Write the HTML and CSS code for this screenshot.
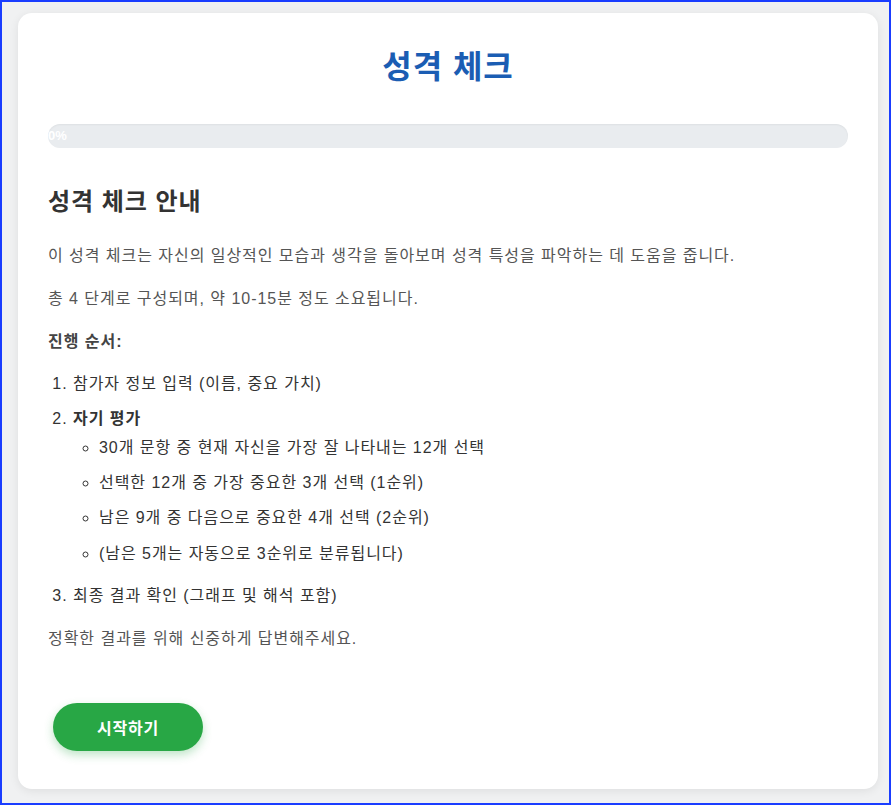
FILE: index.html
```html
<!DOCTYPE html>
<html lang="ko">
<head>
    <meta charset="UTF-8">
    <meta name="viewport" content="width=device-width, initial-scale=1.0">
    <title>성격 체크</title>
    <link rel="stylesheet" href="styles.css">
</head>
<body>
    <div class="frame">
        <div class="container">
            <h1>성격 체크</h1>

            <!-- Barre de progression -->
            <div class="progress">
                <div class="progress-bar">0%</div>
            </div>

            <h2>성격 체크 안내</h2>
            <p>이 성격 체크는 자신의 일상적인 모습과 생각을 돌아보며 성격 특성을 파악하는 데 도움을 줍니다.</p>
            <p>총 4 단계로 구성되며, 약 10-15분 정도 소요됩니다.</p>
            <p class="steps-title"><strong>진행 순서:</strong></p>
            <ol class="steps">
                <li>참가자 정보 입력 (이름, 중요 가치)</li>
                <li><strong>자기 평가</strong>
                    <ul>
                        <li>30개 문항 중 현재 자신을 가장 잘 나타내는 12개 선택</li>
                        <li>선택한 12개 중 가장 중요한 3개 선택 (1순위)</li>
                        <li>남은 9개 중 다음으로 중요한 4개 선택 (2순위)</li>
                        <li>(남은 5개는 자동으로 3순위로 분류됩니다)</li>
                    </ul>
                </li>
                <li>최종 결과 확인 (그래프 및 해석 포함)</li>
            </ol>
            <p>정확한 결과를 위해 신중하게 답변해주세요.</p>

            <div class="actions">
                <button class="start-btn">시작하기</button>
            </div>
        </div>
    </div>
</body>
</html>
```

FILE: styles.css
```css
* { box-sizing: border-box; }

html, body {
    margin: 0;
    padding: 0;
}

body {
    font-family: "Liberation Sans", "Noto Sans CJK KR", sans-serif;
    background-color: #f0f1f2;
    color: #333;
    letter-spacing: 0.06em;
}

.frame {
    min-height: 100vh;
    border: 2px solid #1a3dff;
    padding: 11px 11px 13px 16px;
}

.container {
    background: white;
    border-radius: 14px;
    box-shadow: 0 2px 10px rgba(0, 0, 0, 0.08);
    padding: 30px 30px 38px 30px;
    width: 860px;
}

h1 {
    text-align: center;
    font-size: 32px;
    line-height: 40px;
    color: #1b5db3;
    margin: 4px 0 37px 0;
}

/* Progression */
.progress {
    height: 24px;
    background: #e9ecef;
    border-radius: 12px;
    box-shadow: inset 0 1px 2px rgba(0, 0, 0, 0.05);
}

.progress-bar {
    width: 0;
    height: 100%;
    color: white;
    font-size: 13px;
    font-weight: bold;
    letter-spacing: 0;
    line-height: 24px;
    white-space: nowrap;
}

h2 {
    font-size: 24px;
    line-height: 32px;
    color: #333;
    margin: 38px 0 24px 0;
}

p {
    font-size: 16px;
    line-height: 1.7;
    color: #555;
    margin: 16px 0;
}

.steps-title {
    color: #444;
    margin-bottom: 14px;
}

.steps {
    font-size: 16px;
    line-height: 1.7;
    color: #333;
    padding-left: 25px;
    margin: 14px 0 16px 0;
}

.steps li { margin-bottom: 8px; }

.steps ul {
    list-style: circle;
    padding-left: 26px;
    margin: 2px 0 15px 0;
}

.actions { margin-top: 51px; }

.start-btn {
    margin-left: 5px;
    width: 150px;
    height: 48px;
    border: none;
    border-radius: 24px;
    background-color: #28a745;
    color: white;
    font-family: inherit;
    font-size: 16px;
    font-weight: bold;
    letter-spacing: 0.05em;
    cursor: pointer;
    box-shadow: 0 4px 10px rgba(40, 167, 69, 0.3);
}
```
